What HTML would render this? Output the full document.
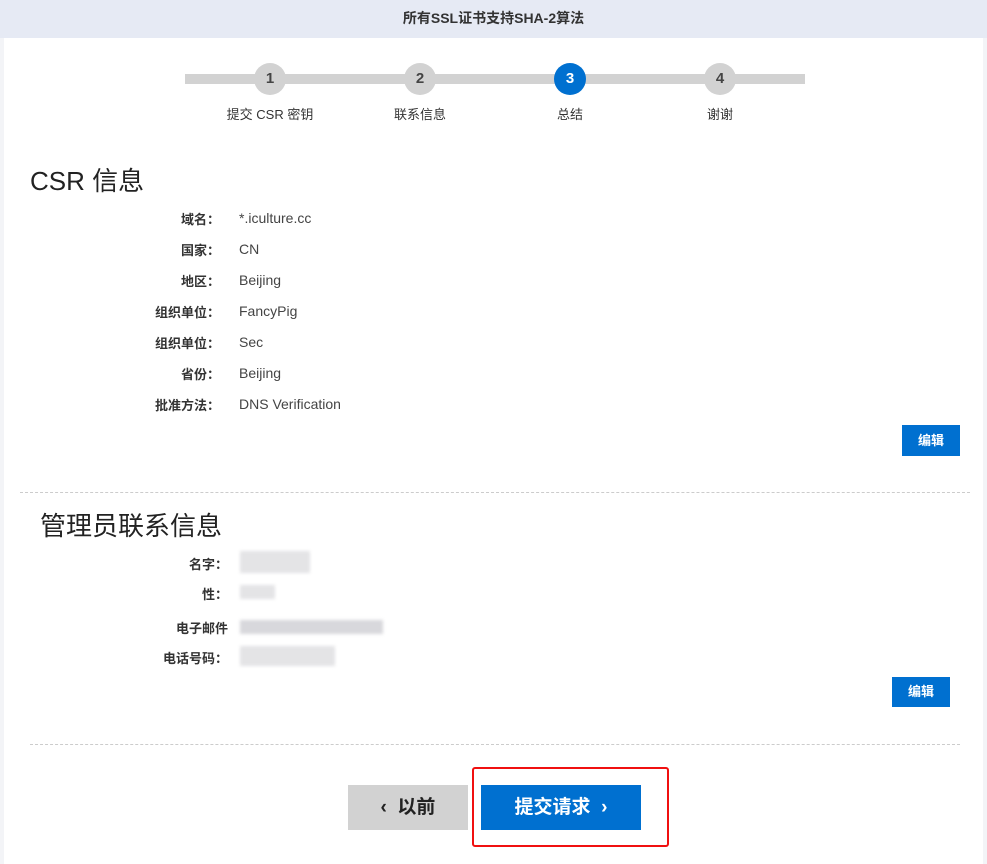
<!DOCTYPE html>
<html><head><meta charset="utf-8"><style>
body{margin:0;width:987px;height:864px;background:#fff;font-family:"Liberation Sans","Noto Sans CJK SC",sans-serif;color:#333;position:relative;overflow:hidden}
.a{position:absolute}
.hdr{left:0;top:0;width:987px;height:38px;background:#e6eaf4;text-align:center;line-height:36px;font-size:14px;font-weight:bold;color:#333}
.side{top:38px;width:4px;height:826px;background:#f3f4f7}
.circ{width:32px;height:32px;border-radius:50%;background:#d2d2d2;text-align:center;line-height:32px;font-weight:bold;font-size:15px;color:#444;top:63px}
.lbl{top:104px;font-size:13px;width:120px;text-align:center;color:#333}
.k{width:120px;text-align:right;font-size:13px;font-weight:bold;color:#333}
.v{font-size:14px;color:#444}
.btn{background:#0070d0;color:#fff;font-size:13px;font-weight:bold;text-align:center}
.blur{background:#e4e4e6;filter:blur(1.5px)}
</style></head><body>
<div class="a hdr">所有SSL证书支持SHA-2算法</div>
<div class="a side" style="left:0"></div><div class="a side" style="left:983px"></div>
<div class="a" style="left:185px;top:74px;width:620px;height:10px;background:#d2d2d2"></div>
<div class="a circ" style="left:254px">1</div>
<div class="a circ" style="left:404px">2</div>
<div class="a circ" style="left:554px;background:#0070d0;color:#fff">3</div>
<div class="a circ" style="left:704px">4</div>
<div class="a lbl" style="left:210px">提交 CSR 密钥</div>
<div class="a lbl" style="left:360px">联系信息</div>
<div class="a lbl" style="left:510px">总结</div>
<div class="a lbl" style="left:660px">谢谢</div>
<div class="a" style="left:30px;top:161px;font-size:26px;color:#222">CSR 信息</div>
<div class="a k" style="left:100px;top:209px">域名：</div><div class="a v" style="left:239px;top:210px">*.iculture.cc</div>
<div class="a k" style="left:100px;top:240px">国家：</div><div class="a v" style="left:239px;top:241px">CN</div>
<div class="a k" style="left:100px;top:271px">地区：</div><div class="a v" style="left:239px;top:272px">Beijing</div>
<div class="a k" style="left:100px;top:302px">组织单位：</div><div class="a v" style="left:239px;top:303px">FancyPig</div>
<div class="a k" style="left:100px;top:333px">组织单位：</div><div class="a v" style="left:239px;top:334px">Sec</div>
<div class="a k" style="left:100px;top:364px">省份：</div><div class="a v" style="left:239px;top:365px">Beijing</div>
<div class="a k" style="left:100px;top:395px">批准方法：</div><div class="a v" style="left:239px;top:396px">DNS Verification</div>
<div class="a btn" style="left:902px;top:425px;width:58px;height:31px;line-height:31px">编辑</div>
<div class="a" style="left:20px;top:492px;width:950px;border-top:1px dashed #ccc"></div>
<div class="a" style="left:40px;top:506px;font-size:26px;color:#222">管理员联系信息</div>
<div class="a k" style="left:108px;top:554px">名字：</div><div class="a blur" style="left:240px;top:551px;width:70px;height:22px"></div>
<div class="a k" style="left:108px;top:584px">性：</div><div class="a blur" style="left:240px;top:585px;width:35px;height:14px"></div>
<div class="a k" style="left:108px;top:618px">电子邮件</div><div class="a blur" style="left:240px;top:620px;width:143px;height:14px;background:#d8d8dc"></div>
<div class="a k" style="left:108px;top:648px">电话号码：</div><div class="a blur" style="left:240px;top:646px;width:95px;height:20px"></div>
<div class="a btn" style="left:892px;top:677px;width:58px;height:30px;line-height:30px">编辑</div>
<div class="a" style="left:30px;top:744px;width:930px;border-top:1px dashed #ccc"></div>
<div class="a" style="left:348px;top:785px;width:120px;height:45px;background:#d2d2d2;line-height:45px;text-align:center;font-size:19px;font-weight:bold;color:#222">‹&nbsp; 以前</div>
<div class="a btn" style="left:481px;top:785px;width:160px;height:45px;line-height:45px;font-size:19px">提交请求 &nbsp;›</div>
<div class="a" style="left:472px;top:767px;width:193px;height:76px;border:2px solid #f01010;border-radius:3px"></div>
</body></html>
